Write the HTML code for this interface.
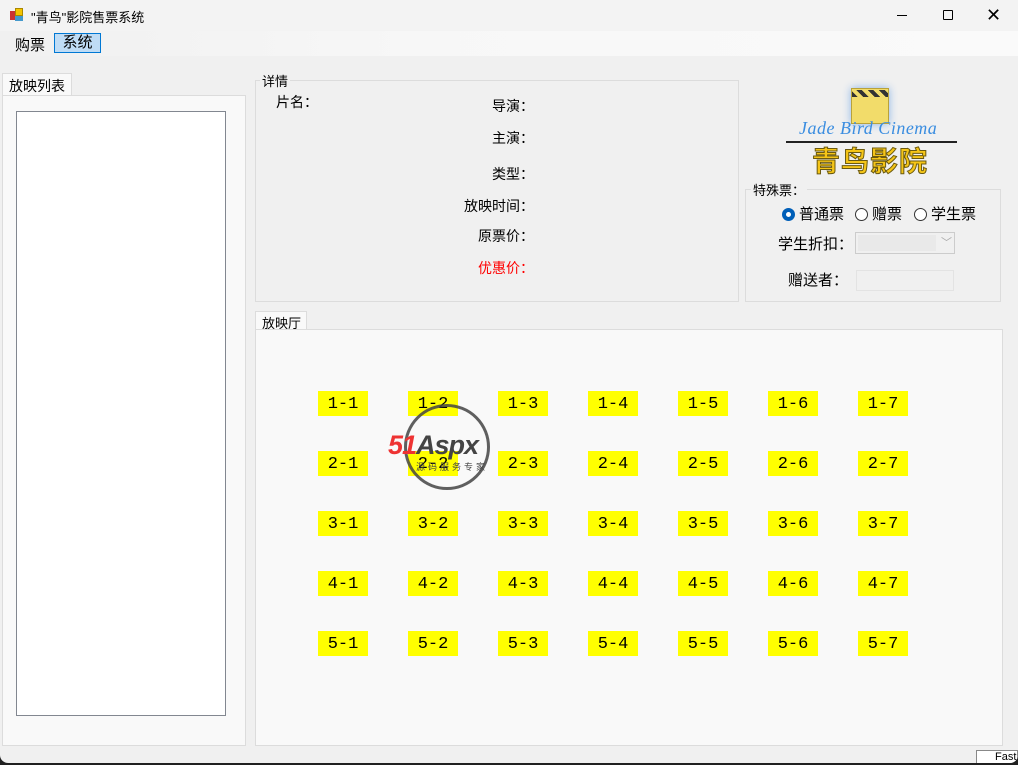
<!DOCTYPE html>
<html><head><meta charset="utf-8"><style>
*{margin:0;padding:0;box-sizing:border-box}
body{width:1018px;height:765px;background:#202020;position:relative;overflow:hidden;font-family:"Liberation Sans","Noto Sans CJK SC",sans-serif;font-size:14px;color:#000}
.win{position:absolute;left:0;top:0;width:1018px;height:763px;background:#f0f0f0;border-radius:0 0 8px 8px;overflow:hidden}
.ab{position:absolute}
.title{left:0;top:0;width:1018px;height:31px;background:#f3f3f3}
.menu{left:0;top:31px;width:1018px;height:25px;background:linear-gradient(90deg,#f0f0f0,#f7f7f7 40%,#fafafa)}
.seat{position:absolute;width:50px;height:25px;background:#ff0;font-family:"Liberation Mono","Noto Sans CJK SC",monospace;font-size:17px;text-align:center;line-height:27px}
.lbl{position:absolute;right:484px;white-space:nowrap;font-family:"Noto Sans CJK SC",sans-serif}
.leg{position:absolute;background:#f0f0f0;font-size:13px;padding:0 2px}
.radio{display:inline-block;width:13px;height:13px;border:1px solid #333;border-radius:50%;vertical-align:-2px;margin-right:4px;background:#fff}
</style></head><body>
<div class="win">
<div class="ab title">
  <div class="ab" style="left:10px;top:8px;width:14px;height:14px">
    <div class="ab" style="left:0;top:3px;width:5px;height:9px;background:#c33"></div>
    <div class="ab" style="left:5px;top:0;width:8px;height:8px;background:#f5c400;border:1px solid #a80"></div>
    <div class="ab" style="left:5px;top:8px;width:8px;height:5px;background:#49c"></div>
  </div>
  <div class="ab" style="left:31px;top:7px;font-size:13px">"青鸟"影院售票系统</div>
  <div class="ab" style="left:897px;top:15px;width:10px;height:1px;background:#000"></div>
  <div class="ab" style="left:943px;top:10px;width:10px;height:10px;border:1px solid #000;border-radius:1px"></div>
  <div class="ab" style="left:986px;top:5px;font-size:18px;line-height:20px">✕</div>
</div>
<div class="ab menu">
  <div class="ab" style="left:15px;top:3px;font-size:15px">购票</div>
  <div class="ab" style="left:54px;top:2px;width:47px;height:20px;background:#bfdcf5;border:1px solid #0078d4;font-size:15px;text-align:center;line-height:18px">系统</div>
</div>
<div class="ab" style="left:2px;top:73px;width:70px;height:23px;background:#f9f9f9;border:1px solid #dcdcdc;border-bottom:none;font-size:14px;padding:2px 0 0 6px">放映列表</div>
<div class="ab" style="left:2px;top:95px;width:244px;height:651px;background:#f9f9f9;border:1px solid #dcdcdc"></div>
<div class="ab" style="left:16px;top:111px;width:210px;height:605px;background:#fff;border:1px solid #828790"></div>
<div class="ab" style="left:255px;top:80px;width:484px;height:222px;border:1px solid #dcdcdc"></div>
<div class="leg" style="left:260px;top:71px">详情</div>
<div class="ab" style="left:276px;top:92px;font-family:'Noto Sans CJK SC',sans-serif">片名：</div>
<div class="lbl" style="top:96px">导演：</div>
<div class="lbl" style="top:128px">主演：</div>
<div class="lbl" style="top:164px">类型：</div>
<div class="lbl" style="top:196px">放映时间：</div>
<div class="lbl" style="top:226px">原票价：</div>
<div class="lbl" style="top:258px;color:#f00">优惠价：</div>
<div class="ab" style="left:851px;top:88px;width:38px;height:36px;background:#f2dc6a;border:1px solid #b9a23a;box-shadow:0 0 8px #8ab4e8"></div>
<div class="ab" style="left:852px;top:90px;width:36px;height:7px;background:repeating-linear-gradient(45deg,#333 0 4px,#f2dc6a 4px 8px)"></div>
<div class="ab" style="left:799px;top:118px;font-family:'Liberation Serif',serif;font-style:italic;font-size:18px;color:#3a8de0;letter-spacing:0.5px">Jade Bird Cinema</div>
<div class="ab" style="left:786px;top:141px;width:171px;height:2px;background:#222"></div>
<div class="ab" style="left:812px;top:144px;font-size:28px;font-weight:bold;color:#f5c518;-webkit-text-stroke:1px #6b5a10;letter-spacing:1px;line-height:36px">青鸟影院</div>
<div class="ab" style="left:745px;top:189px;width:256px;height:113px;border:1px solid #dcdcdc"></div>
<div class="leg" style="left:751px;top:180px">特殊票：</div>
<div class="ab" style="left:782px;top:203px;font-size:15px"><span class="radio" style="border:4px solid #005fb8"></span>普通票</div>
<div class="ab" style="left:855px;top:203px;font-size:15px"><span class="radio"></span>赠票</div>
<div class="ab" style="left:914px;top:203px;font-size:15px"><span class="radio"></span>学生票</div>
<div class="ab" style="left:778px;top:233px;font-size:15px;font-family:'Noto Sans CJK SC',sans-serif">学生折扣：</div>
<div class="ab" style="left:855px;top:232px;width:100px;height:22px;border:1px solid #ccc;background:#f0f0f0"><div class="ab" style="left:2px;top:2px;width:78px;height:16px;background:#e9e9e9"></div><div class="ab" style="left:85px;top:1px;color:#aaa;font-size:11px">﹀</div></div>
<div class="ab" style="left:788px;top:269px;font-size:15px;font-family:'Noto Sans CJK SC',sans-serif">赠送者：</div>
<div class="ab" style="left:856px;top:270px;width:98px;height:21px;border:1px solid #e3e3e3;background:#f0f0f0"></div>
<div class="ab" style="left:255px;top:311px;width:52px;height:19px;background:#f9f9f9;border:1px solid #dcdcdc;border-bottom:none;font-size:13px;padding:1px 0 0 6px">放映厅</div>
<div class="ab" style="left:255px;top:329px;width:748px;height:417px;background:#f9f9f9;border:1px solid #dcdcdc"></div>
<div id="seats"></div>
<div class="ab" style="left:404px;top:404px;width:86px;height:86px;border:3px solid #444;border-radius:50%;opacity:.85"></div>
<div class="ab" style="left:388px;top:430px;font-size:27px;font-weight:bold;font-style:italic;color:#e33;letter-spacing:-1px">51<span style="color:#444">Aspx</span></div>
<div class="ab" style="left:416px;top:460px;font-size:9px;color:#444;letter-spacing:3px">源码服务专家</div>
<div class="ab" style="left:976px;top:750px;width:42px;height:15px;background:#fff;border:1px solid #888;font-size:11px;padding-left:18px">Fast</div>
</div>
<script>
var h='';for(var r=1;r<=5;r++)for(var c=1;c<=7;c++){h+='<div class="seat" style="left:'+(318+(c-1)*90)+'px;top:'+(391+(r-1)*60)+'px">'+r+'-'+c+'</div>';}
document.getElementById('seats').outerHTML=h;
</script>
</body></html>
